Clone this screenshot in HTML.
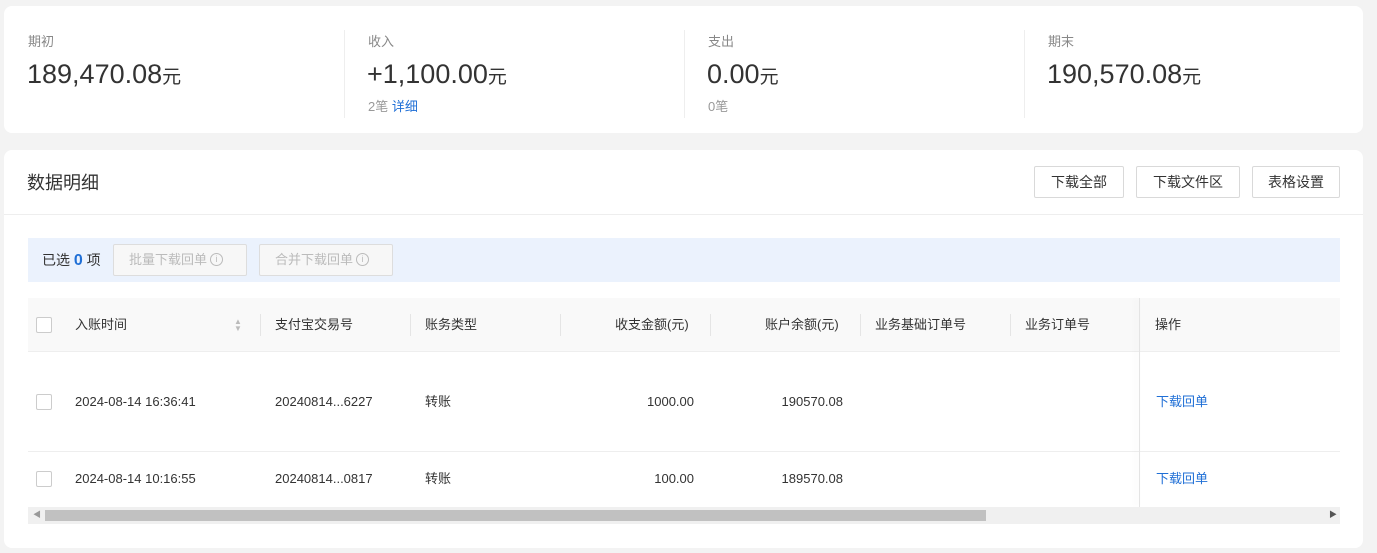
<!DOCTYPE html>
<html><head><meta charset="utf-8"><style>
*{box-sizing:border-box;margin:0;padding:0}
body{width:1377px;height:553px;background:#f3f3f3;font-family:"Liberation Sans","Noto Sans CJK SC",sans-serif;color:#333;position:relative;overflow:hidden;font-size:13px}
.card{position:absolute;left:4px;width:1359px;background:#fff;border-radius:8px}
.abs{position:absolute;white-space:nowrap}
.lbl{font-size:13px;color:#888;line-height:20px}
.big{font-size:27px;color:#333;line-height:36px;height:36px}
.big span{font-size:19px}
.sub{font-size:13px;color:#999;line-height:20px}
.vd{position:absolute;top:24px;width:1px;height:88px;background:#eee}
.btn{position:absolute;top:16px;height:32px;border:1px solid #d9d9d9;border-radius:2px;font-size:14px;line-height:30px;text-align:center;color:#333;background:#fff}
.dbtn{position:absolute;top:94px;height:32px;border:1px solid #ddd;background:#f7f7f7;color:#bbb;font-size:13px;line-height:30px;padding-left:15px;border-radius:2px;white-space:nowrap}
.cb{position:absolute;width:16px;height:16px;border:1px solid #ccc;border-radius:2px;background:#fff}
.th{position:absolute;top:165px;font-size:13px;color:#333;line-height:20px;height:20px;white-space:nowrap}
.cd{position:absolute;top:164px;width:1px;height:22px;background:#e5e5e5}
.td{position:absolute;font-size:13px;color:#333;line-height:20px;height:20px;white-space:nowrap}
.a{color:#1f6fd6}
.info{display:inline-block;width:13px;height:13px;border:1px solid #bbb;border-radius:50%;font-size:9px;line-height:11px;text-align:center;vertical-align:middle;margin-left:3px;color:#bbb;position:relative;top:-1px}
</style></head><body>
<div class="card" style="top:6px;height:127px">
  <div class="abs lbl" style="left:24px;top:26px">期初</div>
  <div class="abs big" style="left:23px;top:50px">189,470.08<span>元</span></div>
  <div class="vd" style="left:340px"></div>
  <div class="abs lbl" style="left:364px;top:26px">收入</div>
  <div class="abs big" style="left:363px;top:50px">+1,100.00<span>元</span></div>
  <div class="abs sub" style="left:364px;top:91px">2笔 <span class="a">详细</span></div>
  <div class="vd" style="left:680px"></div>
  <div class="abs lbl" style="left:704px;top:26px">支出</div>
  <div class="abs big" style="left:703px;top:50px">0.00<span>元</span></div>
  <div class="abs sub" style="left:704px;top:91px">0笔</div>
  <div class="vd" style="left:1020px"></div>
  <div class="abs lbl" style="left:1044px;top:26px">期末</div>
  <div class="abs big" style="left:1043px;top:50px">190,570.08<span>元</span></div>
</div>
<div class="card" style="top:150px;height:398px">
  <div class="abs" style="left:23px;top:20px;font-size:18px;color:#333;line-height:26px">数据明细</div>
  <div class="btn" style="left:1030px;width:90px">下载全部</div>
  <div class="btn" style="left:1132px;width:104px">下载文件区</div>
  <div class="btn" style="left:1248px;width:88px">表格设置</div>
  <div style="position:absolute;left:0;top:64px;width:1359px;height:1px;background:#eee"></div>
  <div style="position:absolute;left:24px;top:88px;width:1312px;height:44px;background:#ebf2fd"></div>
  <div class="abs" style="left:38px;top:100px;font-size:14px;line-height:20px">已选 <b style="color:#1f6fd6;font-size:16px">0</b> 项</div>
  <div class="dbtn" style="left:109px;width:134px">批量下载回单<span class="info">i</span></div>
  <div class="dbtn" style="left:255px;width:134px">合并下载回单<span class="info">i</span></div>
  <div style="position:absolute;left:24px;top:148px;width:1312px;height:54px;background:#f9f9f9;border-bottom:1px solid #eee"></div>
  <div class="cb" style="left:32px;top:167px"></div>
  <div class="th" style="left:71px">入账时间</div>
  <div class="abs" style="left:230px;top:168px;font-size:8px;color:#bbb;line-height:7px">▲<br>▼</div>
  <div class="cd" style="left:256px"></div>
  <div class="th" style="left:271px">支付宝交易号</div>
  <div class="cd" style="left:406px"></div>
  <div class="th" style="left:421px">账务类型</div>
  <div class="cd" style="left:556px"></div>
  <div class="th" style="left:611px">收支金额(元)</div>
  <div class="cd" style="left:706px"></div>
  <div class="th" style="left:761px">账户余额(元)</div>
  <div class="cd" style="left:856px"></div>
  <div class="th" style="left:871px">业务基础订单号</div>
  <div class="cd" style="left:1006px"></div>
  <div class="th" style="left:1021px">业务订单号</div>
  <div class="th" style="left:1151px">操作</div>
  <div style="position:absolute;left:24px;top:301px;width:1312px;height:1px;background:#eee"></div>
  <div class="cb" style="left:32px;top:244px"></div>
  <div class="td" style="left:71px;top:242px">2024-08-14 16:36:41</div>
  <div class="td" style="left:271px;top:242px">20240814...6227</div>
  <div class="td" style="left:421px;top:242px">转账</div>
  <div class="td" style="left:611px;top:242px;width:79px;text-align:right">1000.00</div>
  <div class="td" style="left:761px;top:242px;width:78px;text-align:right">190570.08</div>
  <div class="td a" style="left:1152px;top:242px">下载回单</div>
  <div class="cb" style="left:32px;top:321px"></div>
  <div class="td" style="left:71px;top:319px">2024-08-14 10:16:55</div>
  <div class="td" style="left:271px;top:319px">20240814...0817</div>
  <div class="td" style="left:421px;top:319px">转账</div>
  <div class="td" style="left:611px;top:319px;width:79px;text-align:right">100.00</div>
  <div class="td" style="left:761px;top:319px;width:78px;text-align:right">189570.08</div>
  <div class="td a" style="left:1152px;top:319px">下载回单</div>
  <div style="position:absolute;left:1135px;top:148px;width:1px;height:209px;background:#e4e4e4;box-shadow:-3px 0 6px rgba(0,0,0,.08)"></div>
  <div style="position:absolute;left:24px;top:357px;width:1312px;height:17px;background:#f0f0f0"></div>
  <div style="position:absolute;left:41px;top:360px;width:941px;height:11px;background:#c1c1c1"></div>
  <div class="abs" style="left:29px;top:359px;font-size:8px;color:#999">◀</div>
  <div class="abs" style="left:1325px;top:359px;font-size:8px;color:#555">▶</div>
</div>
</body></html>
